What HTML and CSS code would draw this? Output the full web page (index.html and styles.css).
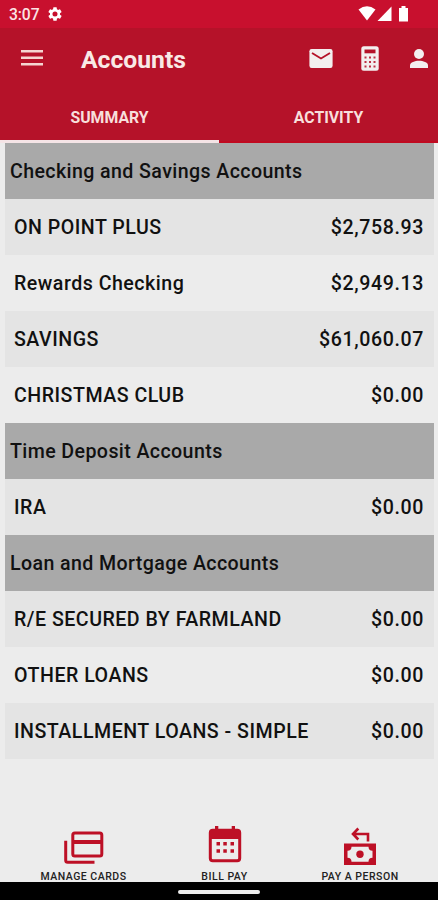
FILE: index.html
```html
<!DOCTYPE html>
<html lang="en">
<head>
<meta charset="utf-8">
<title>Accounts</title>
<link rel="stylesheet" href="styles.css">
</head>
<body>
<div class="phone">
  <div class="status">
    <span class="time">3:07</span>
    <svg class="gear" viewBox="2 2 20 20"><path d="M19.14 12.94c.04-.3.06-.61.06-.94s-.02-.64-.07-.94l2.03-1.58a.5.5 0 0 0 .12-.61l-1.92-3.32a.5.5 0 0 0-.59-.22l-2.39.96a7 7 0 0 0-1.62-.94l-.36-2.54A.48.48 0 0 0 13.92 2.4h-3.84a.48.48 0 0 0-.47.41l-.36 2.54c-.59.24-1.13.57-1.62.94l-2.39-.96a.5.5 0 0 0-.59.22L2.74 8.87a.48.48 0 0 0 .12.61l2.03 1.58a7 7 0 0 0 0 1.88l-2.03 1.58a.5.5 0 0 0-.12.61l1.92 3.32c.12.22.37.29.59.22l2.39-.96c.5.38 1.03.7 1.62.94l.36 2.54c.05.24.24.41.48.41h3.84c.24 0 .44-.17.47-.41l.36-2.54a7 7 0 0 0 1.62-.94l2.39.96c.22.08.47 0 .59-.22l1.92-3.32a.48.48 0 0 0-.12-.61zM12 15.600a3.600 3.600 0 1 1 0-7.200 3.600 3.600 0 0 1 0 7.200z"/></svg>
    <svg class="signals" viewBox="0 0 51 17"><path d="M.5 4.5Q9 -1.800 17.500 4.500L9 15.500Z"/><path d="M33.500 1.500V16H19.500Z"/><path d="M41 3h2.500V1h4v2H50v13.500h-9z"/></svg>
  </div>
  <header class="appbar">
    <svg class="menu" viewBox="0 0 22 16"><path d="M0 0h22v2.500H0zM0 6.500h22V9H0zM0 13h22v2.500H0z"/></svg>
    <h1>Accounts</h1>
    <div class="actions">
      <svg class="mail" viewBox="0 0 24 19"><rect x=".4" width="23.200" height="19" rx="2.200"/><path class="cut" d="M3 4l9 5.500L21 4"/></svg>
      <svg class="calc" viewBox="0 0 18 25"><rect x=".3" y=".3" width="17.400" height="24.400" rx="2.500"/><path class="hole" d="M3.500 3.500h11v3.800h-11z"/><path class="keys" d="M3.500 11.500h11M3.500 16h11M3.500 20.500h11"/></svg>
      <svg class="person" viewBox="0 0 18 19"><circle cx="9" cy="5" r="5"/><path d="M0 19v-2.500C0 13.300 5 11.800 9 11.800s9 1.500 9 4.700V19z"/></svg>
    </div>
  </header>
  <nav class="tabs"><span class="tab active">SUMMARY</span><span class="tab">ACTIVITY</span></nav>
  <main class="list">
    <h2>Checking and Savings Accounts</h2>
    <div class="row shade"><span>ON POINT PLUS</span><b>$2,758.93</b></div>
    <div class="row"><span>Rewards Checking</span><b>$2,949.13</b></div>
    <div class="row shade"><span>SAVINGS</span><b>$61,060.07</b></div>
    <div class="row"><span>CHRISTMAS CLUB</span><b>$0.00</b></div>
    <h2>Time Deposit Accounts</h2>
    <div class="row shade"><span>IRA</span><b>$0.00</b></div>
    <h2>Loan and Mortgage Accounts</h2>
    <div class="row shade"><span>R/E SECURED BY FARMLAND</span><b>$0.00</b></div>
    <div class="row"><span>OTHER LOANS</span><b>$0.00</b></div>
    <div class="row shade"><span>INSTALLMENT LOANS - SIMPLE</span><b>$0.00</b></div>
  </main>
  <footer class="bottom">
    <div class="item cards">
      <svg viewBox="0 0 40 38"><rect x="8.800" y="7" width="29" height="23" rx="2"/><path class="fill" d="M8 14h31v4H8z"/><path d="M1.700 14.700v19.500a2 2 0 0 0 2 2H30.500"/></svg>
      <span>MANAGE CARDS</span>
    </div>
    <div class="item bill">
      <svg viewBox="0 0 34 38"><rect x="2.300" y="4.200" width="29.400" height="30.500" rx="2.500"/><path class="fill" d="M2 4h30v9H2zM7 0h3.300v5H7zM23.700 0H27v5h-3.300zM8.500 16h3.500v3.500H8.500zM15.300 16h3.500v3.500h-3.500zM22.500 16H26v3.500h-3.500zM8.500 23.200h3.500v3.500H8.500zM15.300 23.200h3.500v3.500h-3.500zM22.500 23.200H26v3.500h-3.500z"/></svg>
      <span>BILL PAY</span>
    </div>
    <div class="item pay">
      <svg viewBox="0 0 34 38"><path d="M15.300 1.500L10 7l5.300 5.500M10.500 7H25v7.500"/><path class="fill" fill-rule="evenodd" d="M1 16.500h32V38H1zM8.500 19.700a4 4 0 0 1-4 4v7a4 4 0 0 1 4 4h17a4 4 0 0 1 4-4v-7a4 4 0 0 1-4-4z"/><circle class="fill" cx="17" cy="27.200" r="3.700"/></svg>
      <span>PAY A PERSON</span>
    </div>
  </footer>
  <div class="navbar"><i></i></div>
</div>
</body>
</html>
```

FILE: styles.css
```css
* { box-sizing: border-box; }
body { margin: 0; font-family: Roboto, sans-serif; background: #ececec; }
.phone { width: 438px; height: 900px; display: flex; flex-direction: column; overflow: hidden; }
svg { display: block; flex: none; overflow: visible; }
.status { height: 28px; background: #c8102e; display: flex; align-items: center; padding: 0 29px 0 9px; color: #fbe4e4; }
.status svg { fill: #fff; }
.time { font-size: 15.7px; line-height: 18px; width: 39px; margin-top: 2px; font-weight: 500; letter-spacing: -.1px; }
.gear { width: 14px; height: 14px; }
.signals { width: 51px; height: 17px; margin-left: auto; margin-top: -2px; }
.appbar { height: 63px; background: #b51229; display: flex; align-items: center; padding: 0 10px 0 21px; }
.appbar svg { fill: #f3efef; }
.appbar .menu { width: 22px; height: 16px; fill: #f5d5d1; margin-top: -3px; }
h1 { margin: 1px 0 0 38px; font-size: 24.7px; font-weight: 700; color: #f9e9e6; line-height: 30px; }
.actions { margin: -2px 0 0 auto; display: flex; align-items: center; }
.mail { width: 24px; height: 19px; margin-right: 28px; }
.calc { width: 18px; height: 25px; margin-right: 31px; }
.person { width: 18px; height: 19px; }
.appbar .cut { fill: none; stroke: #b51229; stroke-width: 1.9; }
.appbar .hole { fill: #b51229; }
.calc .keys { stroke: #bd3045; stroke-width: 2; stroke-dasharray: 2 2.5; }
.tabs { height: 52px; background: #b51229; display: flex; }
.tab { flex: 1; text-align: center; font-size: 15.8px; font-weight: 700; line-height: 53px; color: #f8dfdc; border-bottom: 2px solid #c00a20; }
.tab.active { border-bottom: 3px solid #f5e4e6; }
.list { width: 429px; margin-left: 5px; flex: 1; }
h2 { margin: 0; height: 56px; line-height: 57px; padding-left: 5px; background: #a9a9a9; font-size: 19.6px; font-weight: 500; color: #111; letter-spacing: .4px; }
.row { height: 56px; padding: 0 10px 0 9px; display: flex; justify-content: space-between; align-items: center; font-size: 19.6px; font-weight: 500; color: #111; letter-spacing: .5px; }
.row b { font-weight: 500; letter-spacing: .6px; }
.shade { background: #e4e4e4; }
.bottom { height: 57px; padding-top: 1px; display: flex; }
.item { display: flex; flex-direction: column; align-items: center; justify-content: flex-start; font-size: 10.5px; font-weight: 500; color: #222; white-space: nowrap; letter-spacing: .5px; }
.item span { line-height: 12px; margin-top: 7px; }
.item svg { height: 38px; width: 34px; fill: none; stroke: #bd1026; stroke-width: 3; }
.item .fill { fill: #bd1026; stroke: none; }
.item.cards { width: 167px; }
.item.cards svg { width: 40px; }
.item.bill { width: 115px; }
.item.pay { width: 156px; }
.item.pay svg { stroke-width: 2.6; position: relative; top: 1px; }
.navbar { height: 18px; background: #000; display: flex; justify-content: center; align-items: flex-start; padding-top: 8px; }
.navbar i { width: 82px; height: 4px; border-radius: 2px; background: #eee; }
```
